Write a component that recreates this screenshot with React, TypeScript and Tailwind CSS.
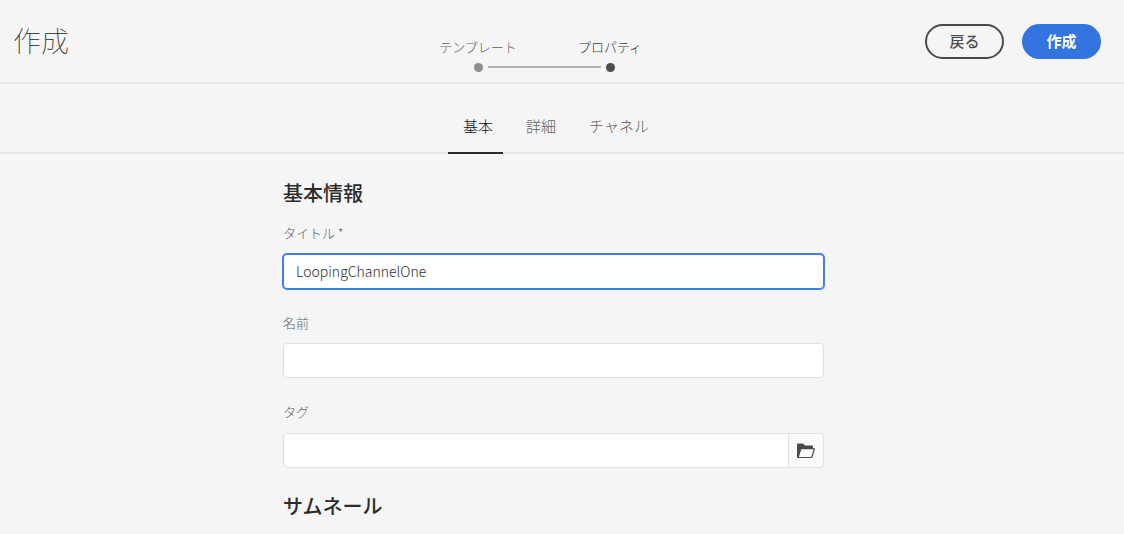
import { useState } from "react";

const tabs = ["基本", "詳細", "チャネル"];

function FolderIcon() {
  return (
    <svg width="18" height="16" viewBox="0 0 18 16" aria-hidden="true">
      <path
        fill="#4b4b4b"
        fillRule="evenodd"
        d="M0 1.6C0 .9.4.5 1 .5h5l2 2h7c.6 0 1 .4 1 1v1.7h1.4c.5 0 .8.4.6.9l-2.6 8.2c-.1.5-.5.7-1 .7H1c-.6 0-1-.4-1-1zM4.3 6.300L1.900 14h12.300l2.400-7.700z"
      />
    </svg>
  );
}

function Steps() {
  return (
    <ol className="flex pr-[26px] text-[13px] leading-5">
      <li className="flex w-[132px] flex-col items-center text-[#606060]">
        <span>テンプレート</span>
        <span className="mt-[6px] flex w-full items-center">
          <span className="flex-1" />
          <span className="mx-[5px] size-[9px] rounded-full bg-[#8e8e8e]" />
          <span className="h-[2px] flex-1 bg-[#b3b3b3]" />
        </span>
      </li>
      <li className="flex w-[132px] flex-col items-center text-[#3a3a3a]" aria-current="step">
        <span>プロパティ</span>
        <span className="mt-[6px] flex w-full items-center">
          <span className="h-[2px] flex-1 bg-[#b3b3b3]" />
          <span className="mx-[5px] size-[9px] rounded-full bg-[#4b4b4b]" />
          <span className="flex-1" />
        </span>
      </li>
    </ol>
  );
}

export default function App() {
  const [tab, setTab] = useState("基本");
  const [title, setTitle] = useState("LoopingChannelOne");

  return (
    <div className="min-h-screen bg-[#f5f5f5] font-['Noto_Sans_CJK_JP',sans-serif] font-light text-[#4b4b4b]">
      <header className="grid h-[84px] grid-cols-[1fr_auto_1fr] items-center border-b-2 border-[#e8e8e8] pr-[23px] pl-[13px]">
        <h1 className="pb-[2px] text-[28px] leading-10 font-thin text-[#1c1c1c]">作成</h1>
        <div className="pt-[26px]">
          <Steps />
        </div>
        <div className="flex justify-end gap-[18px] text-[15px]">
          <button
            type="button"
            className="h-[35px] w-[79px] rounded-full border-2 border-[#4b4b4b] leading-5 font-medium text-[#4b4b4b]"
          >
            戻る
          </button>
          <button type="button" className="h-[35px] w-[79px] rounded-full bg-[#3474e0] leading-5 font-bold text-white">
            作成
          </button>
        </div>
      </header>

      <div
        role="tablist"
        className="flex h-[70px] items-end justify-center gap-2 border-b-2 border-[#e8e8e8] pr-[17px] text-[15px]"
      >
        {tabs.map((name) => (
          <button
            key={name}
            type="button"
            role="tab"
            aria-selected={tab === name}
            onClick={() => setTab(name)}
            className={
              tab === name
                ? "-mb-[2px] border-b-2 border-[#2c2c2c] pr-[10px] pb-4 pl-[15px] leading-5 text-[#111111]"
                : "-mb-[2px] border-b-2 border-transparent pr-[10px] pb-4 pl-[15px] leading-5 text-[#606060]"
            }
          >
            {name}
          </button>
        ))}
      </div>

      <main className="pr-[17px]">
        <form className="mx-auto flex max-w-[541px] flex-col pt-[25px]">
          <h2 className="text-[20px] leading-7 font-medium text-[#2c2c2c]">基本情報</h2>

          <label htmlFor="title" className="mt-4 text-[13px] leading-5 text-[#606060]">
            タイトル *
          </label>
          <input
            id="title"
            value={title}
            onChange={(e) => setTitle(e.target.value)}
            className="mt-[11px] h-[35px] rounded-[4px] border border-[#3f80e4] bg-white px-3 pb-[2px] text-[14px] font-light text-[#2c2c2c] ring-1 ring-[#3f80e4] outline-none"
          />

          <label htmlFor="name" className="mt-6 text-[13px] leading-5 text-[#606060]">
            名前
          </label>
          <input
            id="name"
            className="mt-[10px] h-[35px] rounded-[4px] border border-[#e0e0e0] bg-white px-3 text-[14px] outline-none"
          />

          <label htmlFor="tags" className="mt-6 text-[13px] leading-5 text-[#606060]">
            タグ
          </label>
          <div className="mt-[11px] flex h-[35px]">
            <input
              id="tags"
              className="min-w-0 flex-1 rounded-l-[4px] border border-[#e0e0e0] bg-white px-3 text-[14px] outline-none"
            />
            <button
              type="button"
              aria-label="タグを選択"
              className="flex w-[35px] items-center justify-center rounded-r-[4px] border border-l-0 border-[#e0e0e0] bg-[#fafafa]"
            >
              <FolderIcon />
            </button>
          </div>

          <h2 className="mt-6 text-[20px] leading-7 font-medium text-[#2c2c2c]">サムネール</h2>
        </form>
      </main>
    </div>
  );
}
